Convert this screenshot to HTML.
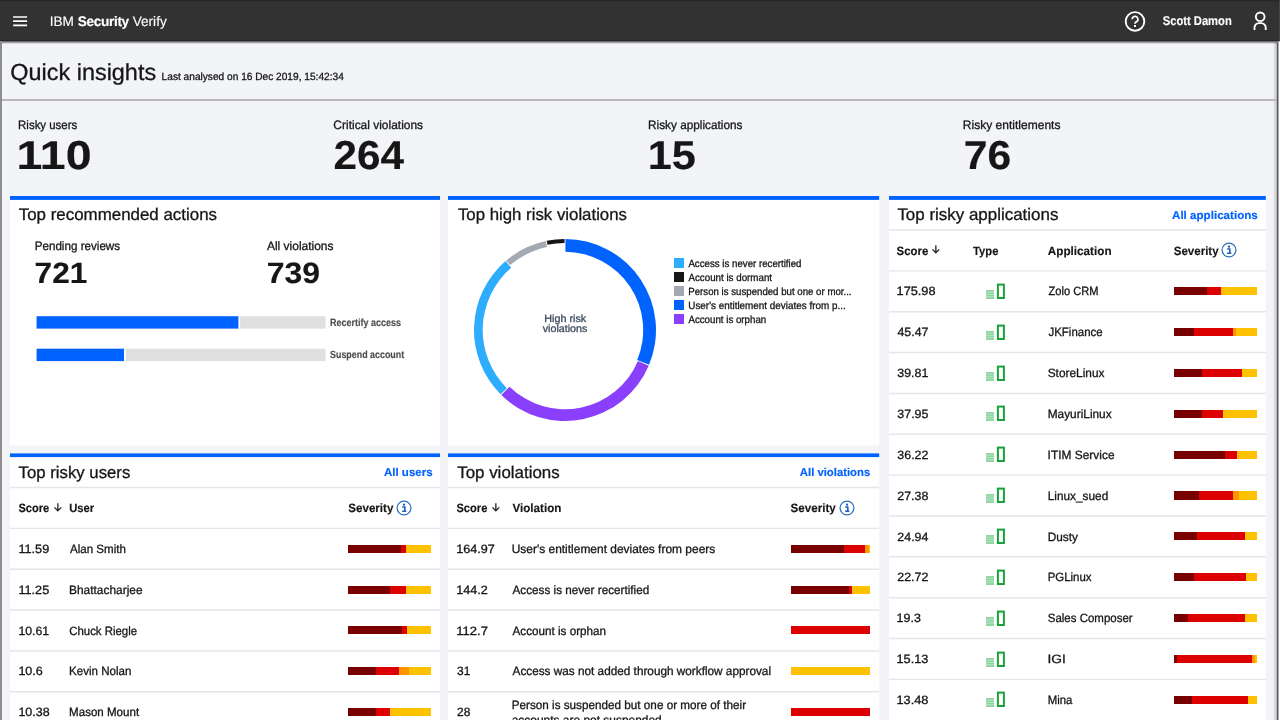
<!DOCTYPE html>
<html lang="en">
<head>
<meta charset="utf-8">
<title>IBM Security Verify</title>
<style>
*{box-sizing:border-box;margin:0;padding:0}
html,body{width:1280px;height:720px;overflow:hidden}
body{background:#f2f4f8;font-family:"Liberation Sans",sans-serif;color:#161616;position:relative}
#root{position:absolute;left:0;top:0;width:1280px;height:720px;will-change:transform}
.a{position:absolute}
.t{position:absolute;white-space:nowrap;line-height:1;transform-origin:0 0}
.t{-webkit-text-stroke:.3px currentColor}
.b{font-weight:700;-webkit-text-stroke:.15px currentColor}
#hdr{left:0;top:0;width:1280px;height:41px;background:#323232;border-bottom:1px solid #262626}
#hdr .t{color:#fff;-webkit-text-stroke:.12px currentColor}
.card{position:absolute;background:#fff;border-top:3.5px solid #0062ff}
.hl{position:absolute;height:1.3px;background:#e7e7e7}
.sq{position:absolute;width:10px;height:10px}
.sev{position:absolute;display:flex}
.sev i{display:block;height:100%}
.d{background:#790000}.r{background:#dc0000}.o{background:#ff9500}.y{background:#ffc200}
</style>
</head>
<body>
<div id="root">
<!-- header -->
<div id="hdr" class="a">
  <div class="a" style="left:0;top:0;width:1280px;height:2px;background:linear-gradient(to bottom,#222,#323232)"></div>
  <svg class="a" style="left:10px;top:12px" width="20" height="18" viewBox="0 0 20 18"><path d="M3.1 5h14M3.1 9.2h14M3.1 13.35h14" stroke="#fff" stroke-width="1.7" fill="none"/></svg>
<div class="t" style="left:0;top:15.00px;font-size:13.8px;transform:translate(49.68px,0) matrix(0.9891,0,.001,1,0,0)">IBM <span class="b" style="letter-spacing:-.35px">Security</span> Verify</div>
  <svg class="a" style="left:1124px;top:10px" width="22" height="22" viewBox="0 0 22 22"><circle cx="11" cy="11.4" r="9.3" fill="none" stroke="#fff" stroke-width="1.85"/><path d="M8.2 9.3a2.85 2.85 0 1 1 4 2.6c-.8.4-1.2.8-1.2 1.8" fill="none" stroke="#fff" stroke-width="1.75"/><rect x="10" y="15" width="2" height="2" fill="#fff"/></svg>
<div class="t b" style="left:0;top:15.00px;font-size:12.7px;transform:translate(1162.71px,0) matrix(0.8820,0,.001,1,0,0)">Scott Damon</div>
  <svg class="a" style="left:1250px;top:10px" width="20" height="22" viewBox="0 0 20 22"><circle cx="10.2" cy="6.8" r="4.35" fill="none" stroke="#fff" stroke-width="1.85"/><path d="M4.5 20.1V17.55a4.5 4.5 0 0 1 4.5-4.5h2.2a4.5 4.5 0 0 1 4.5 4.5V20.1" fill="none" stroke="#fff" stroke-width="1.85"/></svg>
</div>
<div class="a" style="left:0;top:41px;width:1280px;height:2.6px;background:linear-gradient(to bottom,rgba(40,40,40,.8),rgba(40,40,40,0))"></div>
<div class="a" style="left:1279px;top:0;width:1px;height:41px;background:#464646"></div>
<!-- window edges -->
<div class="a" style="left:0;top:41px;width:2px;height:679px;background:#8d8d8d"></div>
<div class="a" style="left:1273px;top:42px;width:4px;height:678px;background:linear-gradient(to right,rgba(0,0,0,0),rgba(0,0,0,.22))"></div>
<svg class="a" style="left:1270px;top:41px" width="10" height="679" viewBox="0 0 10 679"><rect x="8.4" y="0.5" width="1.6" height="679" fill="#fff"/><path d="M7.7 1.2V679" stroke="#5c5c5c" stroke-width="1.6"/></svg>
<!-- title -->
<div class="t" style="left:0;top:61.00px;font-size:23.2px;transform:translate(10.27px,0) matrix(1.0104,0,.001,1,0,0)">Quick insights</div>
<div class="t" style="left:0;top:71.00px;font-size:10.5px;transform:translate(161.59px,0) matrix(0.9662,0,.001,1,0,0)">Last analysed on 16 Dec 2019, 15:42:34</div>
<div class="a" style="left:2px;top:98.8px;width:1275px;height:2.2px;background:#b9b9b9"></div>
<svg class="a" style="left:0;top:0" width="1280" height="720" viewBox="0 0 1280 720">
<rect x="10" y="196" width="430.00" height="249.35" fill="#fff"/><rect x="10" y="196" width="430.00" height="3.90" fill="#0062ff"/>
<rect x="448" y="196" width="431.20" height="249.35" fill="#fff"/><rect x="448" y="196" width="431.20" height="3.90" fill="#0062ff"/>
<rect x="889" y="196" width="376.80" height="524.00" fill="#fff"/><rect x="889" y="196" width="376.80" height="3.90" fill="#0062ff"/>
<rect x="10" y="453.4" width="430.00" height="266.60" fill="#fff"/><rect x="10" y="453.4" width="430.00" height="3.70" fill="#0062ff"/>
<rect x="448" y="453.4" width="431.20" height="266.60" fill="#fff"/><rect x="448" y="453.4" width="431.20" height="3.70" fill="#0062ff"/>
</svg>
<!-- KPIs -->
<div class="t" style="left:0;top:119.00px;font-size:12.2px;transform:translate(18.09px,0) matrix(0.9390,0,.001,1,0,0)">Risky users</div>
<div class="t b" style="left:0;top:136.00px;font-size:40.3px;transform:translate(16.53px,0) matrix(1.1538,0,.001,1,0,0)">110</div>
<div class="t" style="left:0;top:119.00px;font-size:12.2px;transform:translate(333.36px,0) matrix(0.9813,0,.001,1,0,0)">Critical violations</div>
<div class="t b" style="left:0;top:136.00px;font-size:40.3px;transform:translate(333.38px,0) matrix(1.0515,0,.001,1,0,0)">264</div>
<div class="t" style="left:0;top:119.00px;font-size:12.2px;transform:translate(648.03px,0) matrix(0.9675,0,.001,1,0,0)">Risky applications</div>
<div class="t b" style="left:0;top:136.00px;font-size:40.3px;transform:translate(647.61px,0) matrix(1.0732,0,.001,1,0,0)">15</div>
<div class="t" style="left:0;top:119.00px;font-size:12.2px;transform:translate(962.86px,0) matrix(0.9869,0,.001,1,0,0)">Risky entitlements</div>
<div class="t b" style="left:0;top:136.00px;font-size:40.3px;transform:translate(963.62px,0) matrix(1.0606,0,.001,1,0,0)">76</div>
<!-- card 1 -->
<div class="t" style="left:0;top:207.00px;font-size:16.8px;transform:translate(18.67px,0) matrix(1.0079,0,.001,1,0,0)">Top recommended actions</div>
<div class="t" style="left:0;top:240.00px;font-size:12.2px;transform:translate(34.68px,0) matrix(0.9548,0,.001,1,0,0)">Pending reviews</div>
<div class="t b" style="left:0;top:258.00px;font-size:29.5px;transform:translate(34.51px,0) matrix(1.0731,0,.001,1,0,0)">721</div>
<div class="t" style="left:0;top:240.00px;font-size:12.2px;transform:translate(266.93px,0) matrix(0.9824,0,.001,1,0,0)">All violations</div>
<div class="t b" style="left:0;top:258.00px;font-size:29.5px;transform:translate(266.62px,0) matrix(1.0828,0,.001,1,0,0)">739</div>
<svg class="a" style="left:30px;top:310px" width="300" height="56" viewBox="30 310 300 56"><rect x="36.6" y="316.2" width="288.9" height="12.4" fill="#e0e0e0"/><rect x="36.6" y="316.2" width="203.5" height="12.4" fill="#fff"/><rect x="36.6" y="316.2" width="201.8" height="12.4" fill="#0062ff"/><rect x="36.6" y="348.7" width="288.9" height="12.4" fill="#e0e0e0"/><rect x="36.6" y="348.7" width="89.1" height="12.4" fill="#fff"/><rect x="36.6" y="348.7" width="87.4" height="12.4" fill="#0062ff"/></svg>
<div class="t b" style="left:0;top:318.00px;font-size:10.4px;color:#4d4d4d;transform:translate(330.01px,0) matrix(0.8650,0,.001,1,0,0)">Recertify access</div>
<div class="t b" style="left:0;top:350.00px;font-size:10.4px;color:#4d4d4d;transform:translate(330.04px,0) matrix(0.8562,0,.001,1,0,0)">Suspend account</div>
<!-- card 2 -->
<div class="t" style="left:0;top:207.00px;font-size:16.8px;transform:translate(457.88px,0) matrix(1.0014,0,.001,1,0,0)">Top high risk violations</div>
<svg class="a" style="left:465px;top:229.5px" width="200" height="200" viewBox="-100 -100 200 200">
<path d="M0.48 -91.00A91 91 0 0 1 84.07 34.82L72.25 29.93A78.2 78.2 0 0 0 0.41 -78.20Z" fill="#0062ff"/>
<path d="M83.70 35.70A91 91 0 0 1 -63.67 65.02L-55.48 56.66A79.3 79.3 0 0 0 72.94 31.11Z" fill="#8a3ffc"/>
<path d="M-64.35 64.35A91 91 0 0 1 -59.46 -68.89L-53.78 -62.30A82.3 82.3 0 0 0 -58.19 58.19Z" fill="#2eadff"/>
<path d="M-58.74 -69.51A91 91 0 0 1 -19.23 -88.94L-17.96 -83.08A85 85 0 0 0 -54.86 -64.92Z" fill="#a2a9b0"/>
<path d="M-18.30 -89.14A91 91 0 0 1 -0.48 -91.00L-0.46 -87.00A87 87 0 0 0 -17.49 -85.22Z" fill="#161616"/>
</svg>
<div class="t" style="left:0;top:313.00px;font-size:10.5px;color:#3d4b5f;transform:translate(544.36px,0) matrix(1.0227,0,.001,1,0,0)">High risk</div>
<div class="t" style="left:0;top:323.00px;font-size:10.5px;color:#3d4b5f;transform:translate(542.66px,0) matrix(1.0219,0,.001,1,0,0)">violations</div>
<div class="sq" style="left:673.8px;top:258.20px;background:#2eadff"></div>
<div class="t" style="left:0;top:259.00px;font-size:10.4px;transform:translate(688.40px,0) matrix(0.9324,0,.001,1,0,0)">Access is never recertified</div>
<div class="sq" style="left:673.8px;top:272.10px;background:#161616"></div>
<div class="t" style="left:0;top:273.00px;font-size:10.4px;transform:translate(688.40px,0) matrix(0.9403,0,.001,1,0,0)">Account is dormant</div>
<div class="sq" style="left:673.8px;top:286.00px;background:#a2a9b0"></div>
<div class="t" style="left:0;top:287.00px;font-size:10.4px;transform:translate(688.25px,0) matrix(0.9299,0,.001,1,0,0)">Person is suspended but one or mor...</div>
<div class="sq" style="left:673.8px;top:299.90px;background:#0062ff"></div>
<div class="t" style="left:0;top:301.00px;font-size:10.4px;transform:translate(688.24px,0) matrix(0.9518,0,.001,1,0,0)">User's entitlement deviates from p...</div>
<div class="sq" style="left:673.8px;top:313.80px;background:#8a3ffc"></div>
<div class="t" style="left:0;top:315.00px;font-size:10.4px;transform:translate(688.40px,0) matrix(0.9352,0,.001,1,0,0)">Account is orphan</div>
<!-- card 3 -->
<div class="t" style="left:0;top:207.00px;font-size:16.8px;transform:translate(897.39px,0) matrix(1.0093,0,.001,1,0,0)">Top risky applications</div>
<div class="t b" style="left:0;top:210.00px;font-size:11.4px;color:#0062ff;transform:translate(1171.98px,0) matrix(1.0195,0,.001,1,0,0)">All applications</div>
<div class="t b" style="left:0;top:245.00px;font-size:12.0px;transform:translate(896.61px,0) matrix(0.9502,0,.001,1,0,0)">Score</div>
<svg class="a" style="left:932.10px;top:245.12px" width="8" height="9" viewBox="0 0 8 9"><path d="M3.85 0.2v7.2M0.5 4.4l3.35 3.4 3.35-3.4" fill="none" stroke="#2b2b2b" stroke-width="1.35"/></svg>
<div class="t b" style="left:0;top:245.00px;font-size:12.0px;transform:translate(973.01px,0) matrix(0.9348,0,.001,1,0,0)">Type</div>
<div class="t b" style="left:0;top:245.00px;font-size:12.0px;transform:translate(1047.80px,0) matrix(0.9753,0,.001,1,0,0)">Application</div>
<div class="t b" style="left:0;top:245.00px;font-size:12.0px;transform:translate(1173.72px,0) matrix(0.9613,0,.001,1,0,0)">Severity</div>
<svg class="a" style="left:1221.30px;top:242.43px" width="16" height="16" viewBox="0 0 16 16"><circle cx="8" cy="8" r="6.9" fill="none" stroke="#2a6ebb" stroke-width="1.25"/><circle cx="8" cy="4.7" r="1.15" fill="#1f5fb5"/><path d="M6.2 7h2.6v4.3M6.1 11.2h4.2" fill="none" stroke="#1f5fb5" stroke-width="1.6"/></svg>
<div class="t" style="left:0;top:285.00px;font-size:12.0px;transform:translate(896.52px,0) matrix(1.0634,0,.001,1,0,0)">175.98</div>
<svg class="a" style="left:985.80px;top:282.88px" width="20" height="16" viewBox="0 0 20 16"><rect x="0" y="7" width="8" height="9" fill="#8fd6a0"/><path d="M0 9.2h8M0 11.4h8M0 13.6h8" stroke="#c4ead0" stroke-width=".7"/><rect x="11.9" y="1.6" width="6" height="13.4" fill="#fff" stroke="#18a23a" stroke-width="2"/></svg>
<div class="t" style="left:0;top:285.00px;font-size:12.0px;transform:translate(1048.47px,0) matrix(0.9250,0,.001,1,0,0)">Zolo CRM</div>
<div class="sev" style="left:1174px;top:287.18px;width:82.7px;height:8.1px"><i class="d" style="width:32.50px"></i><i class="r" style="width:14.47px"></i><i class="y" style="width:35.73px"></i></div>
<div class="t" style="left:0;top:326.00px;font-size:12.0px;transform:translate(897.42px,0) matrix(1.0328,0,.001,1,0,0)">45.47</div>
<svg class="a" style="left:985.80px;top:323.73px" width="20" height="16" viewBox="0 0 20 16"><rect x="0" y="7" width="8" height="9" fill="#8fd6a0"/><path d="M0 9.2h8M0 11.4h8M0 13.6h8" stroke="#c4ead0" stroke-width=".7"/><rect x="11.9" y="1.6" width="6" height="13.4" fill="#fff" stroke="#18a23a" stroke-width="2"/></svg>
<div class="t" style="left:0;top:326.00px;font-size:12.0px;transform:translate(1048.44px,0) matrix(0.9559,0,.001,1,0,0)">JKFinance</div>
<div class="sev" style="left:1174px;top:328.02px;width:82.7px;height:8.1px"><i class="d" style="width:20.18px"></i><i class="r" style="width:38.95px"></i><i class="o" style="width:2.73px"></i><i class="y" style="width:20.84px"></i></div>
<div class="t" style="left:0;top:367.00px;font-size:12.0px;transform:translate(897.30px,0) matrix(1.0349,0,.001,1,0,0)">39.81</div>
<svg class="a" style="left:985.80px;top:364.58px" width="20" height="16" viewBox="0 0 20 16"><rect x="0" y="7" width="8" height="9" fill="#8fd6a0"/><path d="M0 9.2h8M0 11.4h8M0 13.6h8" stroke="#c4ead0" stroke-width=".7"/><rect x="11.9" y="1.6" width="6" height="13.4" fill="#fff" stroke="#18a23a" stroke-width="2"/></svg>
<div class="t" style="left:0;top:367.00px;font-size:12.0px;transform:translate(1047.69px,0) matrix(0.9890,0,.001,1,0,0)">StoreLinux</div>
<div class="sev" style="left:1174px;top:368.88px;width:82.7px;height:8.1px"><i class="d" style="width:27.54px"></i><i class="r" style="width:40.11px"></i><i class="y" style="width:15.05px"></i></div>
<div class="t" style="left:0;top:408.00px;font-size:12.0px;transform:translate(897.30px,0) matrix(1.0359,0,.001,1,0,0)">37.95</div>
<svg class="a" style="left:985.80px;top:405.43px" width="20" height="16" viewBox="0 0 20 16"><rect x="0" y="7" width="8" height="9" fill="#8fd6a0"/><path d="M0 9.2h8M0 11.4h8M0 13.6h8" stroke="#c4ead0" stroke-width=".7"/><rect x="11.9" y="1.6" width="6" height="13.4" fill="#fff" stroke="#18a23a" stroke-width="2"/></svg>
<div class="t" style="left:0;top:408.00px;font-size:12.0px;transform:translate(1047.66px,0) matrix(0.9890,0,.001,1,0,0)">MayuriLinux</div>
<div class="sev" style="left:1174px;top:409.72px;width:82.7px;height:8.1px"><i class="d" style="width:28.28px"></i><i class="r" style="width:20.92px"></i><i class="y" style="width:33.49px"></i></div>
<div class="t" style="left:0;top:449.00px;font-size:12.0px;transform:translate(897.30px,0) matrix(1.0351,0,.001,1,0,0)">36.22</div>
<svg class="a" style="left:985.80px;top:446.28px" width="20" height="16" viewBox="0 0 20 16"><rect x="0" y="7" width="8" height="9" fill="#8fd6a0"/><path d="M0 9.2h8M0 11.4h8M0 13.6h8" stroke="#c4ead0" stroke-width=".7"/><rect x="11.9" y="1.6" width="6" height="13.4" fill="#fff" stroke="#18a23a" stroke-width="2"/></svg>
<div class="t" style="left:0;top:449.00px;font-size:12.0px;transform:translate(1047.61px,0) matrix(0.9934,0,.001,1,0,0)">ITIM Service</div>
<div class="sev" style="left:1174px;top:450.57px;width:82.7px;height:8.1px"><i class="d" style="width:50.94px"></i><i class="r" style="width:12.32px"></i><i class="y" style="width:19.43px"></i></div>
<div class="t" style="left:0;top:490.00px;font-size:12.0px;transform:translate(897.28px,0) matrix(1.0363,0,.001,1,0,0)">27.38</div>
<svg class="a" style="left:985.80px;top:487.13px" width="20" height="16" viewBox="0 0 20 16"><rect x="0" y="7" width="8" height="9" fill="#8fd6a0"/><path d="M0 9.2h8M0 11.4h8M0 13.6h8" stroke="#c4ead0" stroke-width=".7"/><rect x="11.9" y="1.6" width="6" height="13.4" fill="#fff" stroke="#18a23a" stroke-width="2"/></svg>
<div class="t" style="left:0;top:490.00px;font-size:12.0px;transform:translate(1047.66px,0) matrix(0.9865,0,.001,1,0,0)">Linux_sued</div>
<div class="sev" style="left:1174px;top:491.43px;width:82.7px;height:8.1px"><i class="d" style="width:25.06px"></i><i class="r" style="width:34.24px"></i><i class="o" style="width:5.87px"></i><i class="y" style="width:17.53px"></i></div>
<div class="t" style="left:0;top:531.00px;font-size:12.0px;transform:translate(897.28px,0) matrix(1.0375,0,.001,1,0,0)">24.94</div>
<svg class="a" style="left:985.80px;top:527.98px" width="20" height="16" viewBox="0 0 20 16"><rect x="0" y="7" width="8" height="9" fill="#8fd6a0"/><path d="M0 9.2h8M0 11.4h8M0 13.6h8" stroke="#c4ead0" stroke-width=".7"/><rect x="11.9" y="1.6" width="6" height="13.4" fill="#fff" stroke="#18a23a" stroke-width="2"/></svg>
<div class="t" style="left:0;top:531.00px;font-size:12.0px;transform:translate(1047.66px,0) matrix(0.9851,0,.001,1,0,0)">Dusty</div>
<div class="sev" style="left:1174px;top:532.27px;width:82.7px;height:8.1px"><i class="d" style="width:23.40px"></i><i class="r" style="width:47.64px"></i><i class="y" style="width:11.66px"></i></div>
<div class="t" style="left:0;top:571.00px;font-size:12.0px;transform:translate(897.28px,0) matrix(1.0356,0,.001,1,0,0)">22.72</div>
<svg class="a" style="left:985.80px;top:568.82px" width="20" height="16" viewBox="0 0 20 16"><rect x="0" y="7" width="8" height="9" fill="#8fd6a0"/><path d="M0 9.2h8M0 11.4h8M0 13.6h8" stroke="#c4ead0" stroke-width=".7"/><rect x="11.9" y="1.6" width="6" height="13.4" fill="#fff" stroke="#18a23a" stroke-width="2"/></svg>
<div class="t" style="left:0;top:571.00px;font-size:12.0px;transform:translate(1047.69px,0) matrix(0.9526,0,.001,1,0,0)">PGLinux</div>
<div class="sev" style="left:1174px;top:573.12px;width:82.7px;height:8.1px"><i class="d" style="width:20.01px"></i><i class="r" style="width:52.02px"></i><i class="y" style="width:10.67px"></i></div>
<div class="t" style="left:0;top:612.00px;font-size:12.0px;transform:translate(896.54px,0) matrix(1.0399,0,.001,1,0,0)">19.3</div>
<svg class="a" style="left:985.80px;top:609.68px" width="20" height="16" viewBox="0 0 20 16"><rect x="0" y="7" width="8" height="9" fill="#8fd6a0"/><path d="M0 9.2h8M0 11.4h8M0 13.6h8" stroke="#c4ead0" stroke-width=".7"/><rect x="11.9" y="1.6" width="6" height="13.4" fill="#fff" stroke="#18a23a" stroke-width="2"/></svg>
<div class="t" style="left:0;top:612.00px;font-size:12.0px;transform:translate(1047.72px,0) matrix(0.9574,0,.001,1,0,0)">Sales Composer</div>
<div class="sev" style="left:1174px;top:613.98px;width:82.7px;height:8.1px"><i class="d" style="width:14.22px"></i><i class="r" style="width:56.81px"></i><i class="y" style="width:11.66px"></i></div>
<div class="t" style="left:0;top:653.00px;font-size:12.0px;transform:translate(896.52px,0) matrix(1.0625,0,.001,1,0,0)">15.13</div>
<svg class="a" style="left:985.80px;top:650.52px" width="20" height="16" viewBox="0 0 20 16"><rect x="0" y="7" width="8" height="9" fill="#8fd6a0"/><path d="M0 9.2h8M0 11.4h8M0 13.6h8" stroke="#c4ead0" stroke-width=".7"/><rect x="11.9" y="1.6" width="6" height="13.4" fill="#fff" stroke="#18a23a" stroke-width="2"/></svg>
<div class="t" style="left:0;top:653.00px;font-size:12.0px;transform:translate(1047.51px,0) matrix(1.1463,0,.001,1,0,0)">IGI</div>
<div class="sev" style="left:1174px;top:654.82px;width:82.7px;height:8.1px"><i class="d" style="width:3.31px"></i><i class="r" style="width:75.17px"></i><i class="o" style="width:2.98px"></i><i class="y" style="width:1.24px"></i></div>
<div class="t" style="left:0;top:694.00px;font-size:12.0px;transform:translate(896.52px,0) matrix(1.0621,0,.001,1,0,0)">13.48</div>
<svg class="a" style="left:985.80px;top:691.38px" width="20" height="16" viewBox="0 0 20 16"><rect x="0" y="7" width="8" height="9" fill="#8fd6a0"/><path d="M0 9.2h8M0 11.4h8M0 13.6h8" stroke="#c4ead0" stroke-width=".7"/><rect x="11.9" y="1.6" width="6" height="13.4" fill="#fff" stroke="#18a23a" stroke-width="2"/></svg>
<div class="t" style="left:0;top:694.00px;font-size:12.0px;transform:translate(1047.69px,0) matrix(0.9489,0,.001,1,0,0)">Mina</div>
<div class="sev" style="left:1174px;top:695.67px;width:82.7px;height:8.1px"><i class="d" style="width:17.53px"></i><i class="r" style="width:55.99px"></i><i class="y" style="width:9.18px"></i></div>
<!-- card 4 -->
<div class="t" style="left:0;top:465.00px;font-size:16.8px;transform:translate(18.53px,0) matrix(0.9990,0,.001,1,0,0)">Top risky users</div>
<div class="t b" style="left:0;top:467.00px;font-size:11.4px;color:#0062ff;transform:translate(383.98px,0) matrix(1.0088,0,.001,1,0,0)">All users</div>
<div class="t b" style="left:0;top:502.00px;font-size:12.0px;transform:translate(18.44px,0) matrix(0.9245,0,.001,1,0,0)">Score</div>
<svg class="a" style="left:53.60px;top:502.62px" width="8" height="9" viewBox="0 0 8 9"><path d="M3.85 0.2v7.2M0.5 4.4l3.35 3.4 3.35-3.4" fill="none" stroke="#2b2b2b" stroke-width="1.35"/></svg>
<div class="t b" style="left:0;top:502.00px;font-size:12.0px;transform:translate(69.13px,0) matrix(0.9387,0,.001,1,0,0)">User</div>
<div class="t b" style="left:0;top:502.00px;font-size:12.0px;transform:translate(348.23px,0) matrix(0.9674,0,.001,1,0,0)">Severity</div>
<svg class="a" style="left:396.30px;top:500.03px" width="16" height="16" viewBox="0 0 16 16"><circle cx="8" cy="8" r="6.9" fill="none" stroke="#2a6ebb" stroke-width="1.25"/><circle cx="8" cy="4.7" r="1.15" fill="#1f5fb5"/><path d="M6.2 7h2.6v4.3M6.1 11.2h4.2" fill="none" stroke="#1f5fb5" stroke-width="1.6"/></svg>
<div class="t" style="left:0;top:543.00px;font-size:12.0px;transform:translate(18.37px,0) matrix(1.0578,0,.001,1,0,0)">11.59</div>
<div class="t" style="left:0;top:543.00px;font-size:12.0px;transform:translate(69.95px,0) matrix(0.9630,0,.001,1,0,0)">Alan Smith</div>
<div class="sev" style="left:348.2px;top:544.67px;width:83.3px;height:8.1px"><i class="d" style="width:52.48px"></i><i class="r" style="width:5.25px"></i><i class="y" style="width:25.57px"></i></div>
<div class="t" style="left:0;top:584.00px;font-size:12.0px;transform:translate(18.37px,0) matrix(1.0571,0,.001,1,0,0)">11.25</div>
<div class="t" style="left:0;top:584.00px;font-size:12.0px;transform:translate(69.05px,0) matrix(0.9921,0,.001,1,0,0)">Bhattacharjee</div>
<div class="sev" style="left:348.2px;top:585.52px;width:83.3px;height:8.1px"><i class="d" style="width:41.90px"></i><i class="r" style="width:15.83px"></i><i class="y" style="width:25.57px"></i></div>
<div class="t" style="left:0;top:625.00px;font-size:12.0px;transform:translate(18.38px,0) matrix(1.0206,0,.001,1,0,0)">10.61</div>
<div class="t" style="left:0;top:625.00px;font-size:12.0px;transform:translate(69.16px,0) matrix(0.9520,0,.001,1,0,0)">Chuck Riegle</div>
<div class="sev" style="left:348.2px;top:626.37px;width:83.3px;height:8.1px"><i class="d" style="width:53.48px"></i><i class="r" style="width:5.83px"></i><i class="y" style="width:23.99px"></i></div>
<div class="t" style="left:0;top:665.00px;font-size:12.0px;transform:translate(18.37px,0) matrix(1.0467,0,.001,1,0,0)">10.6</div>
<div class="t" style="left:0;top:665.00px;font-size:12.0px;transform:translate(69.07px,0) matrix(0.9633,0,.001,1,0,0)">Kevin Nolan</div>
<div class="sev" style="left:348.2px;top:667.22px;width:83.3px;height:8.1px"><i class="d" style="width:27.66px"></i><i class="r" style="width:22.66px"></i><i class="o" style="width:10.83px"></i><i class="y" style="width:22.16px"></i></div>
<div class="t" style="left:0;top:706.00px;font-size:12.0px;transform:translate(18.38px,0) matrix(1.0386,0,.001,1,0,0)">10.38</div>
<div class="t" style="left:0;top:706.00px;font-size:12.0px;transform:translate(69.07px,0) matrix(0.9630,0,.001,1,0,0)">Mason Mount</div>
<div class="sev" style="left:348.2px;top:708.07px;width:83.3px;height:8.1px"><i class="d" style="width:27.66px"></i><i class="r" style="width:14.24px"></i><i class="y" style="width:41.40px"></i></div>
<!-- card 5 -->
<div class="t" style="left:0;top:465.00px;font-size:16.8px;transform:translate(457.19px,0) matrix(1.0078,0,.001,1,0,0)">Top violations</div>
<div class="t b" style="left:0;top:467.00px;font-size:11.4px;color:#0062ff;transform:translate(799.82px,0) matrix(0.9926,0,.001,1,0,0)">All violations</div>
<div class="t b" style="left:0;top:502.00px;font-size:12.0px;transform:translate(456.44px,0) matrix(0.9257,0,.001,1,0,0)">Score</div>
<svg class="a" style="left:491.80px;top:502.62px" width="8" height="9" viewBox="0 0 8 9"><path d="M3.85 0.2v7.2M0.5 4.4l3.35 3.4 3.35-3.4" fill="none" stroke="#2b2b2b" stroke-width="1.35"/></svg>
<div class="t b" style="left:0;top:502.00px;font-size:12.0px;transform:translate(512.44px,0) matrix(0.9709,0,.001,1,0,0)">Violation</div>
<div class="t b" style="left:0;top:502.00px;font-size:12.0px;transform:translate(790.60px,0) matrix(0.9678,0,.001,1,0,0)">Severity</div>
<svg class="a" style="left:838.80px;top:500.03px" width="16" height="16" viewBox="0 0 16 16"><circle cx="8" cy="8" r="6.9" fill="none" stroke="#2a6ebb" stroke-width="1.25"/><circle cx="8" cy="4.7" r="1.15" fill="#1f5fb5"/><path d="M6.2 7h2.6v4.3M6.1 11.2h4.2" fill="none" stroke="#1f5fb5" stroke-width="1.6"/></svg>
<div class="t" style="left:0;top:543.00px;font-size:12.0px;transform:translate(456.32px,0) matrix(1.0502,0,.001,1,0,0)">164.97</div>
<div class="t" style="left:0;top:543.00px;font-size:12.0px;transform:translate(511.65px,0) matrix(0.9962,0,.001,1,0,0)">User's entitlement deviates from peers</div>
<div class="sev" style="left:790.8px;top:544.67px;width:79.4px;height:8.1px"><i class="d" style="width:53.52px"></i><i class="r" style="width:20.88px"></i><i class="o" style="width:3.81px"></i><i class="y" style="width:1.19px"></i></div>
<div class="t" style="left:0;top:584.00px;font-size:12.0px;transform:translate(456.33px,0) matrix(1.0467,0,.001,1,0,0)">144.2</div>
<div class="t" style="left:0;top:584.00px;font-size:12.0px;transform:translate(512.55px,0) matrix(0.9754,0,.001,1,0,0)">Access is never recertified</div>
<div class="sev" style="left:790.8px;top:585.52px;width:79.4px;height:8.1px"><i class="d" style="width:57.80px"></i><i class="r" style="width:3.89px"></i><i class="y" style="width:17.71px"></i></div>
<div class="t" style="left:0;top:625.00px;font-size:12.0px;transform:translate(456.30px,0) matrix(1.0835,0,.001,1,0,0)">112.7</div>
<div class="t" style="left:0;top:625.00px;font-size:12.0px;transform:translate(512.55px,0) matrix(0.9734,0,.001,1,0,0)">Account is orphan</div>
<div class="sev" style="left:790.8px;top:626.37px;width:79.4px;height:8.1px"><i class="r" style="width:79.40px"></i></div>
<div class="t" style="left:0;top:665.00px;font-size:12.0px;transform:translate(457.10px,0) matrix(0.9962,0,.001,1,0,0)">31</div>
<div class="t" style="left:0;top:665.00px;font-size:12.0px;transform:translate(512.55px,0) matrix(0.9809,0,.001,1,0,0)">Access was not added through workflow approval</div>
<div class="sev" style="left:790.8px;top:667.22px;width:79.4px;height:8.1px"><i class="y" style="width:79.40px"></i></div>
<div class="t" style="left:0;top:706.00px;font-size:12.0px;transform:translate(457.08px,0) matrix(0.9962,0,.001,1,0,0)">28</div>
<div class="t" style="left:0;top:699.00px;font-size:12.0px;transform:translate(511.67px,0) matrix(0.9760,0,.001,1,0,0)">Person is suspended but one or more of their</div>
<div class="t" style="left:0;top:714.00px;font-size:12.0px;transform:translate(511.71px,0) matrix(0.9950,0,.001,1,0,0)">accounts are not suspended</div>
<div class="sev" style="left:790.8px;top:708.07px;width:79.4px;height:8.1px"><i class="r" style="width:79.40px"></i></div>
<svg class="a" style="left:0;top:0" width="1280" height="720" viewBox="0 0 1280 720"><path d="M889 230.00h377" stroke="#e6e6e6" stroke-width="1.45"/><path d="M889 270.85h377" stroke="#e6e6e6" stroke-width="1.45"/><path d="M889 311.70h377" stroke="#e6e6e6" stroke-width="1.45"/><path d="M889 352.55h377" stroke="#e6e6e6" stroke-width="1.45"/><path d="M889 393.40h377" stroke="#e6e6e6" stroke-width="1.45"/><path d="M889 434.25h377" stroke="#e6e6e6" stroke-width="1.45"/><path d="M889 475.10h377" stroke="#e6e6e6" stroke-width="1.45"/><path d="M889 515.95h377" stroke="#e6e6e6" stroke-width="1.45"/><path d="M889 556.80h377" stroke="#e6e6e6" stroke-width="1.45"/><path d="M889 597.65h377" stroke="#e6e6e6" stroke-width="1.45"/><path d="M889 638.50h377" stroke="#e6e6e6" stroke-width="1.45"/><path d="M889 679.35h377" stroke="#e6e6e6" stroke-width="1.45"/><path d="M10 487.50h430" stroke="#e6e6e6" stroke-width="1.45"/><path d="M10 528.35h430" stroke="#e6e6e6" stroke-width="1.45"/><path d="M10 569.20h430" stroke="#e6e6e6" stroke-width="1.45"/><path d="M10 610.05h430" stroke="#e6e6e6" stroke-width="1.45"/><path d="M10 650.90h430" stroke="#e6e6e6" stroke-width="1.45"/><path d="M10 691.75h430" stroke="#e6e6e6" stroke-width="1.45"/><path d="M448 487.50h431" stroke="#e6e6e6" stroke-width="1.45"/><path d="M448 528.35h431" stroke="#e6e6e6" stroke-width="1.45"/><path d="M448 569.20h431" stroke="#e6e6e6" stroke-width="1.45"/><path d="M448 610.05h431" stroke="#e6e6e6" stroke-width="1.45"/><path d="M448 650.90h431" stroke="#e6e6e6" stroke-width="1.45"/><path d="M448 691.75h431" stroke="#e6e6e6" stroke-width="1.45"/></svg>
</div>
</body>
</html>
